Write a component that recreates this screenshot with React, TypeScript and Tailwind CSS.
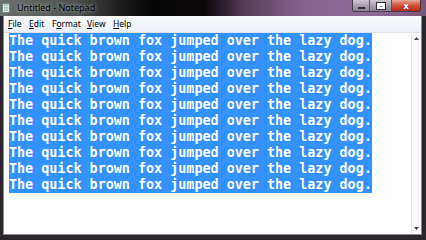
import React from "react";

const lines = Array.from({ length: 10 }, () => "The quick brown fox jumped over the lazy dog.");

function NotepadIcon() {
  return (
    <svg width="8" height="10" viewBox="0 0 8 10">
      <rect x="0.5" y="0.5" width="7" height="9" fill="#d8e6e0" stroke="#6f8a80" />
      <rect x="1.5" y="1.5" width="5" height="1" fill="#8fb3a6" />
      <line x1="2" y1="4.5" x2="6" y2="4.5" stroke="#9aa" strokeWidth="0.6" />
      <line x1="2" y1="6" x2="6" y2="6" stroke="#9aa" strokeWidth="0.6" />
      <line x1="2" y1="7.5" x2="6" y2="7.5" stroke="#9aa" strokeWidth="0.6" />
    </svg>
  );
}

export default function App() {
  return (
    <div className="w-[426px] h-[240px] overflow-hidden flex flex-col bg-[#2a262b]" style={{ fontFamily: '"Segoe UI", "Noto Sans", "Open Sans", sans-serif' }}>
      {/* Title bar */}
      <div className="h-[16px] flex items-start bg-[linear-gradient(90deg,#6d716e_0%,#4c4f4d_18%,#1c1c1c_28%,#050505_36%,#0c0709_48%,#5a3f5c_58%,#86688e_72%,#8b6c97_88%,#7a5578_100%)]">
        <div className="pl-[2px] pt-[3px]">
          <NotepadIcon />
        </div>
        <div className="ml-[7px] pt-[1px] text-[9px] leading-[14px] text-black [text-shadow:0_0_4px_rgba(230,235,230,0.8)]">
          Untitled - Notepad
        </div>
        <div className="ml-auto mr-[5px] flex h-[12px] rounded-b-[3px] overflow-hidden border border-t-0 border-[#4a3a48]">
          <div className="w-[17px] h-full bg-[linear-gradient(#cfc6d2,#a99eb0_50%,#8d7f94)] flex items-center justify-center border-r border-[#5e5060]">
            <div className="w-[7px] h-[2px] bg-white border border-[#333] mt-[4px]" />
          </div>
          <div className="w-[22px] h-full bg-[linear-gradient(#cfc6d2,#a99eb0_50%,#8d7f94)] flex items-center justify-center border-r border-[#5e5060]">
            <div className="w-[8px] h-[6px] border-2 border-white outline outline-1 outline-[#333] border-t-[3px]" />
          </div>
          <div className="w-[28px] h-full bg-[linear-gradient(#e8a89c,#d0503a_50%,#b52a18)] flex items-center justify-center text-white text-[9px] font-bold leading-none [text-shadow:0_0_1px_#333]">
            x
          </div>
        </div>
      </div>

      {/* Window body */}
      <div className="flex-1 flex flex-col ml-[3px] mr-[4px] mb-[5px] border border-t-0 border-[#8a8a8a]">
        {/* Menu bar */}
        <div className="h-[17px] flex items-center bg-[linear-gradient(#fbfcfe,#eaf0f8)] border-b border-[#dfe4ec] text-[8.5px] text-black leading-none pl-[4px]">
          <span className="w-[21px]"><u>F</u>ile</span>
          <span className="w-[23px]"><u>E</u>dit</span>
          <span className="w-[35px]">F<u>o</u>rmat</span>
          <span className="w-[26px]"><u>V</u>iew</span>
          <span><u>H</u>elp</span>
        </div>
        {/* Edit area */}
        <div className="flex-1 flex bg-white">
          <div className="flex-1 pl-[5px]">
            {lines.map((l, i) => (
              <div key={i} className="h-[16px] flex items-center">
                <span className="bg-[#3392fd] text-white font-bold text-[13.4px] leading-[16px] whitespace-pre" style={{ fontFamily: '"DejaVu Sans Mono", "Liberation Mono", monospace' }}>
                  {l}
                </span>
              </div>
            ))}
          </div>
          <div className="w-[10px] border-l border-[#e6e6e6] bg-[#fafafa] flex flex-col items-center justify-between pt-[4px] pb-[4px]">
            <svg width="5" height="3" viewBox="0 0 5 3"><path d="M0 3 L2.5 0 L5 3 Z" fill="#444" /></svg>
            <svg width="5" height="3" viewBox="0 0 5 3"><path d="M0 0 L2.5 3 L5 0 Z" fill="#444" /></svg>
          </div>
        </div>
      </div>
    </div>
  );
}
